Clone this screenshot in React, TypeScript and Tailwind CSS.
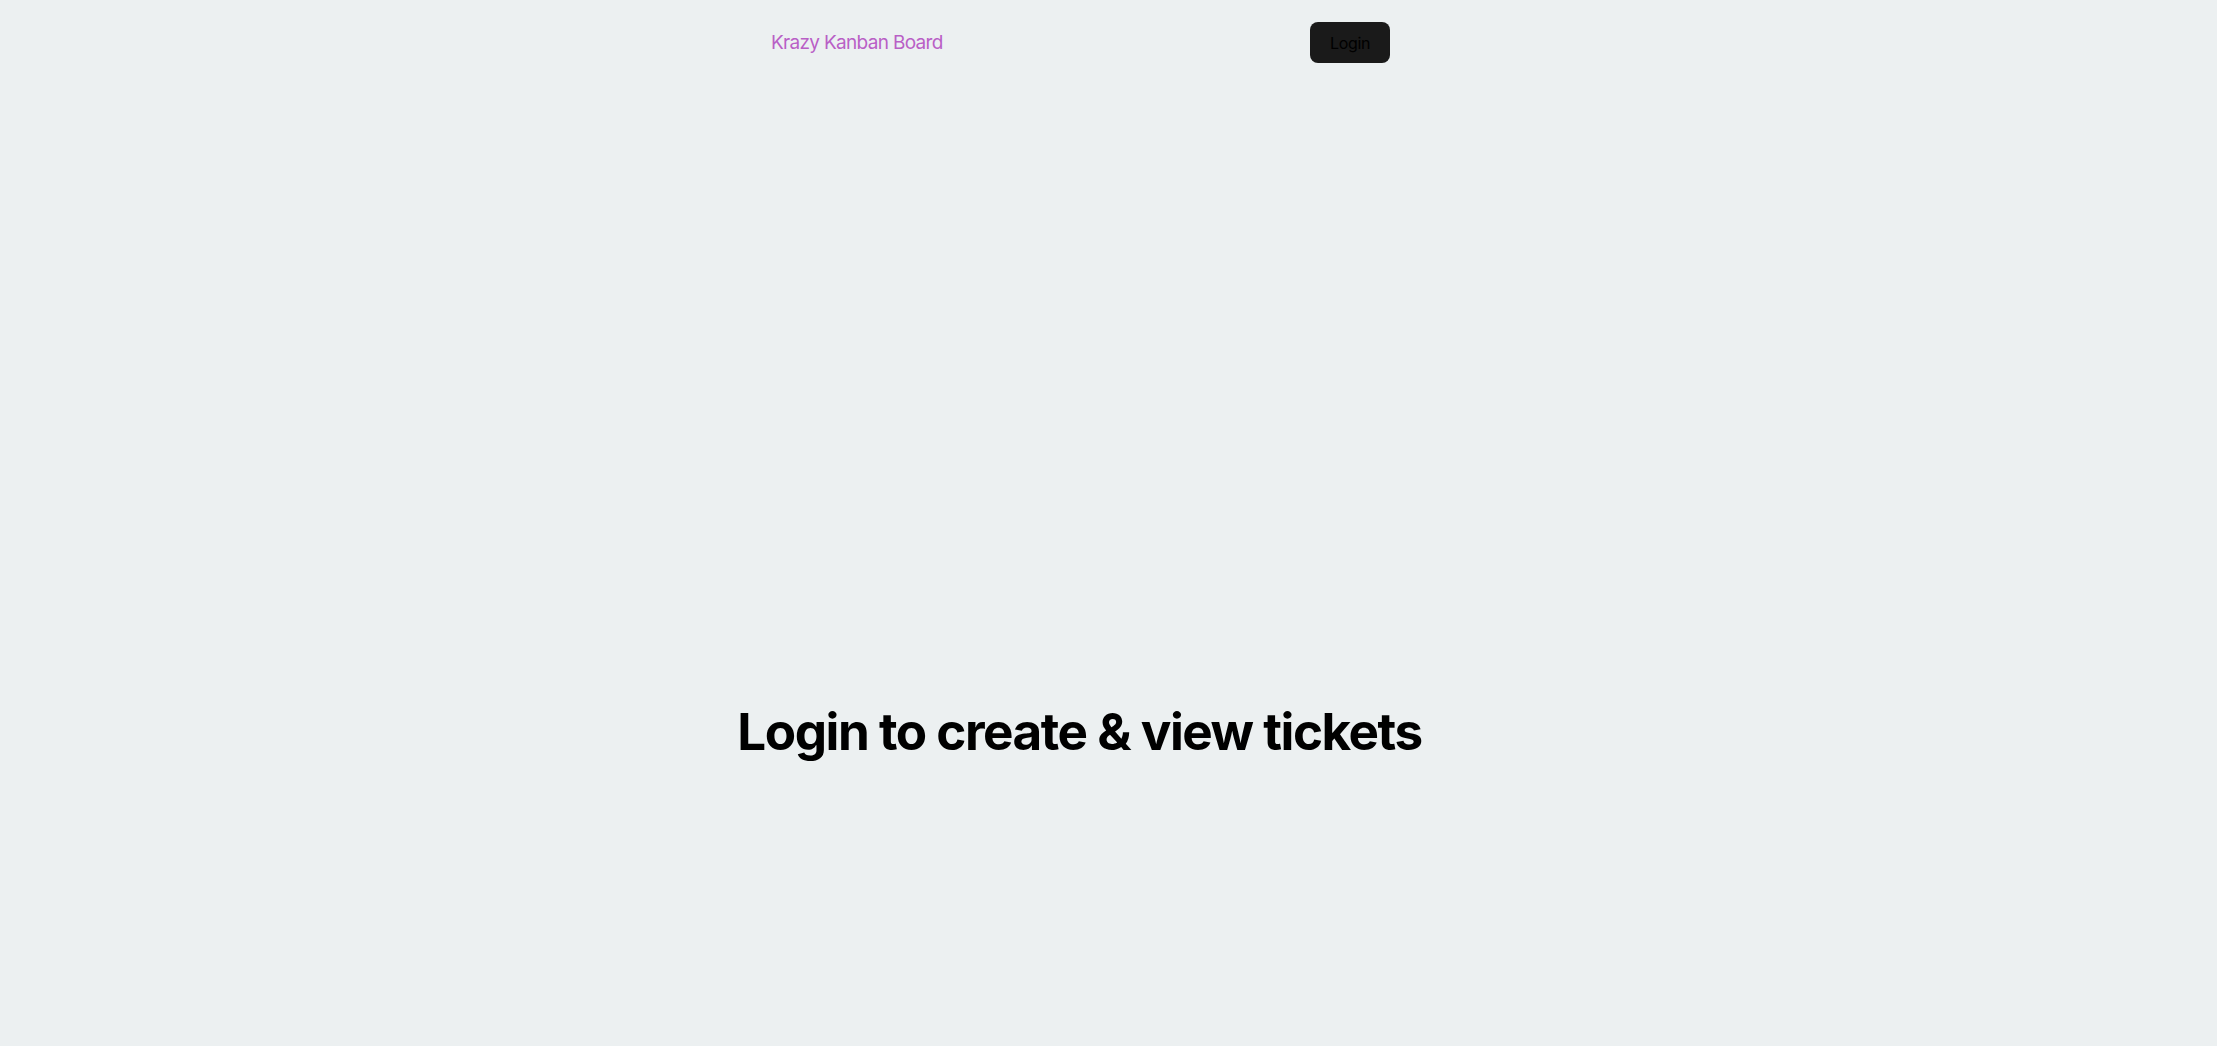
export default function App() {
  return (
    <div
      className="min-h-screen w-full bg-[#ecf0f1] flex justify-center pr-[55px]"
      style={{ fontFamily: "Inter, 'Noto Sans', sans-serif" }}
    >
      <div className="w-[680px] flex flex-col">
        <nav className="h-[85px] flex items-center justify-between pl-[30px] pr-[31px]">
          <span className="text-[19px] leading-[28px] tracking-[-0.036em] text-[#b95fc6]">Krazy Kanban Board</span>
          <button className="w-[80px] h-[41px] rounded-[8px] bg-[#1a1a1a] border border-transparent text-[16px] tracking-[-0.02em] text-black">
            Login
          </button>
        </nav>
        <h1 className="mt-[618px] mx-[-20px] pr-[3px] text-[51.2px] leading-[1.1] font-bold text-black text-center whitespace-nowrap tracking-[-0.029em]">
          Login to create &amp; view tickets
        </h1>
      </div>
    </div>
  );
}
